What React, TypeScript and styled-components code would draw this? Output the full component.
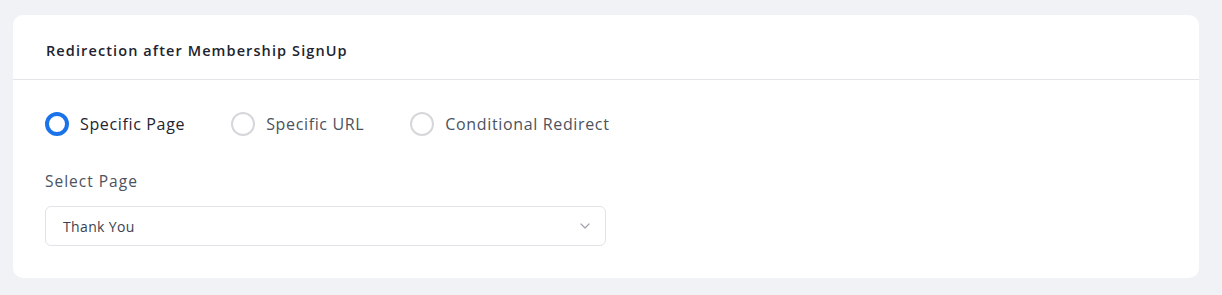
import React, { useState } from "react";
import styled, { createGlobalStyle } from "styled-components";

const Global = createGlobalStyle`
  html, body { margin: 0; padding: 0; background: #f0f2f5; }
  body { font-family: "Open Sans", "Liberation Sans", sans-serif; }
  * { box-sizing: border-box; }
`;

const Page = styled.div`
  padding: 15px 0 0 13px;
  min-height: 295px;
`;

const Card = styled.section`
  width: 1186px;
  height: 263px;
  background: #ffffff;
  border-radius: 10px;
  display: flex;
  flex-direction: column;
`;

const Header = styled.div`
  height: 65px;
  padding: 6px 33px 0;
  display: flex;
  align-items: center;
  border-bottom: 1px solid #e3e5e8;
`;

const Title = styled.h2`
  margin: 0;
  font-size: 14.5px;
  font-weight: 600;
  color: #1d2330;
  letter-spacing: 1.1px;
`;

const Body = styled.div`
  padding: 29px 32px 0;
  display: flex;
  flex-direction: column;
`;

const RadioRow = styled.div`
  display: flex;
  align-items: center;
  gap: 46px;
  height: 30px;
`;

const RadioOption = styled.label`
  display: flex;
  align-items: center;
  gap: 11px;
  cursor: pointer;
`;

const Circle = styled.span<{ $checked: boolean }>`
  width: 24px;
  height: 24px;
  border-radius: 50%;
  border: ${(p) => (p.$checked ? "4px solid #1a73e8" : "2px solid #d5d7da")};
  background: #fff;
  flex-shrink: 0;
`;

const OptionText = styled.span<{ $checked: boolean }>`
  font-size: 16px;
  letter-spacing: 0.65px;
  color: ${(p) => (p.$checked ? "#1f2430" : "#4b5260")};
`;

const FieldLabel = styled.div`
  margin-top: 32px;
  font-size: 15.5px;
  letter-spacing: 1px;
  color: #4b5260;
  line-height: 20px;
`;

const SelectBox = styled.div`
  margin-top: 15px;
  width: 561px;
  height: 40px;
  border: 1px solid #e1e3e6;
  border-radius: 6px;
  display: flex;
  align-items: center;
  justify-content: space-between;
  padding: 0 15px 0 17px;
`;

const SelectValue = styled.span`
  font-size: 14px;
  letter-spacing: 0.35px;
  color: #3b4250;
`;

const Chevron = () => (
  <svg width="10" height="6" viewBox="0 0 10 6" fill="none">
    <path d="M1 1l4 4 4-4" stroke="#a0a5ad" strokeWidth="1.2" strokeLinecap="round" strokeLinejoin="round" />
  </svg>
);

const options = ["Specific Page", "Specific URL", "Conditional Redirect"];

export default function App() {
  const [selected, setSelected] = useState(0);
  return (
    <>
      <Global />
      <Page>
        <Card>
          <Header>
            <Title>Redirection after Membership SignUp</Title>
          </Header>
          <Body>
            <RadioRow>
              {options.map((o, i) => (
                <RadioOption key={o} onClick={() => setSelected(i)}>
                  <Circle $checked={selected === i} />
                  <OptionText $checked={selected === i}>{o}</OptionText>
                </RadioOption>
              ))}
            </RadioRow>
            <FieldLabel>Select Page</FieldLabel>
            <SelectBox>
              <SelectValue>Thank You</SelectValue>
              <Chevron />
            </SelectBox>
          </Body>
        </Card>
      </Page>
    </>
  );
}
